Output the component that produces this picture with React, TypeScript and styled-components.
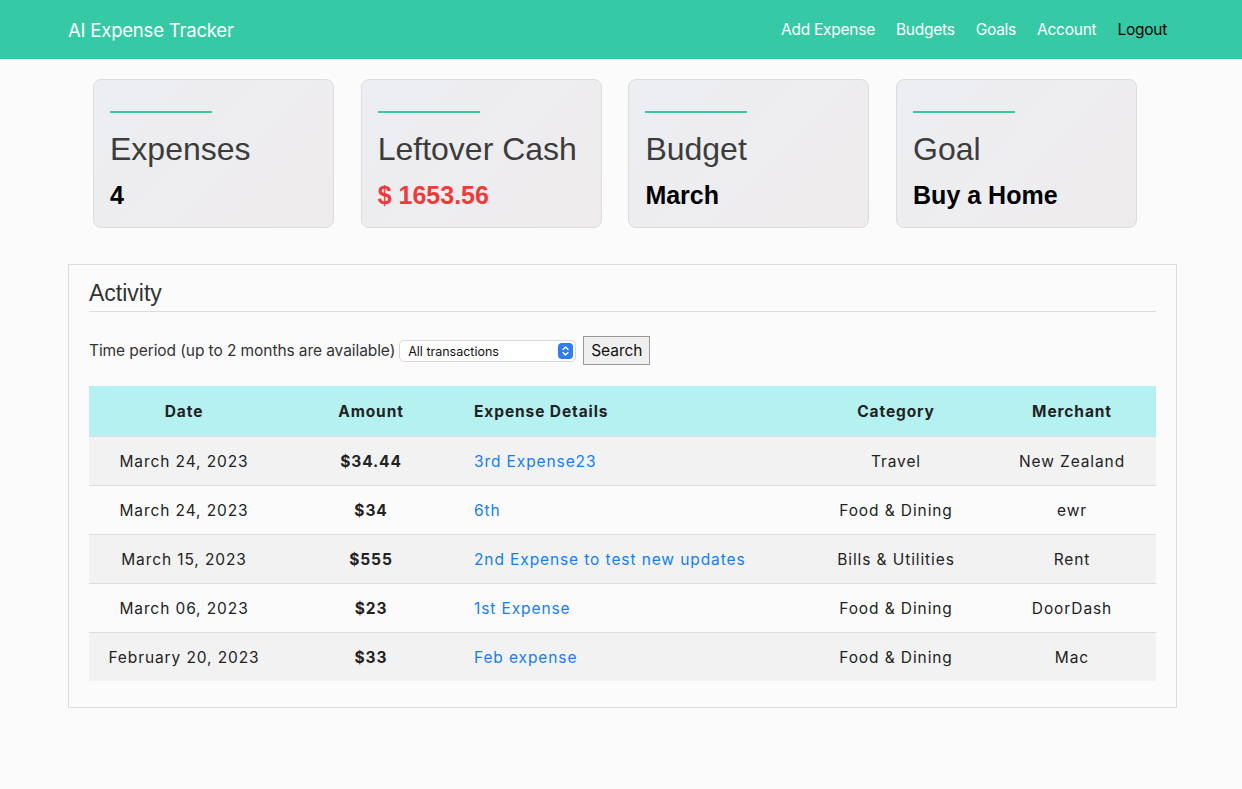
import React from "react";
import styled, { createGlobalStyle } from "styled-components";

const Global = createGlobalStyle`
  html, body { margin: 0; padding: 0; background: #fbfbfb; }
  body { font-family: Inter, "Liberation Sans", Arial, sans-serif; color: #222; }
  * { box-sizing: border-box; }
`;

const Nav = styled.nav`
  height: 59px;
  background: #36c9a5;
  display: flex;
  align-items: center;
  justify-content: space-between;
  padding: 0 75px 0 68px;
`;

const Brand = styled.div`
  color: #fff;
  font-size: 18.5px;
  font-family: Inter, "Liberation Sans", sans-serif;
  letter-spacing: -0.2px;
`;

const Links = styled.div`
  display: flex;
  gap: 21px;
`;

const NavLink = styled.a<{ $dark?: boolean }>`
  color: ${(p) => (p.$dark ? "#000" : "#fff")};
  font-size: 15.5px;
  text-decoration: none;
  letter-spacing: -0.25px;
`;

const Main = styled.main`
  padding: 20px 65px 0 68px;
`;

const Cards = styled.div`
  display: flex;
  gap: 26.7px;
  padding-left: 25px;
`;

const Card = styled.div`
  width: 241px;
  height: 149px;
  border: 1px solid #dcdcdc;
  border-radius: 8px;
  background: linear-gradient(135deg, #eceef2 0%, #efebec 100%);
  padding: 31px 16px 0 16px;
`;

const Accent = styled.div`
  width: 102px;
  height: 2px;
  background: #36c9a5;
`;

const CardTitle = styled.div`
  font-family: "Liberation Sans", Arial, sans-serif;
  font-size: 32px;
  color: #3c3c3c;
  margin-top: 18px;
  line-height: 36px;
`;

const CardValue = styled.div<{ $red?: boolean }>`
  font-family: "Liberation Sans", Arial, sans-serif;
  font-size: 25px;
  font-weight: bold;
  color: ${(p) => (p.$red ? "#f03a3a" : "#000")};
  margin-top: 13px;
  line-height: 30px;
`;

const Panel = styled.section`
  margin-top: 36px;
  border: 1px solid #dcdcdc;
  background: #fbfbfb;
  padding: 14px 20px 26px 20px;
`;

const PanelTitle = styled.h2`
  margin: 0;
  font-family: "Liberation Sans", Arial, sans-serif;
  font-weight: normal;
  font-size: 23px;
  color: #333;
  padding-bottom: 4px;
  border-bottom: 1px solid #dcdcdc;
  line-height: 28px;
`;

const Filter = styled.div`
  display: flex;
  align-items: center;
  margin-top: 24px;
  font-size: 15.5px;
  letter-spacing: -0.08px;
  color: #333;
  gap: 4px;
`;

const Select = styled.div`
  width: 177px;
  height: 22px;
  border: 1px solid #d8d8d8;
  border-radius: 5px;
  background: #fff;
  display: flex;
  align-items: center;
  justify-content: space-between;
  padding: 0 2px 0 8px;
  font-size: 12.5px;
  letter-spacing: 0;
  color: #111;
  margin-top: 1px;
`;

const Stepper = styled.span`
  width: 15px;
  height: 16px;
  border-radius: 4px;
  background: #2f7cf6;
  display: flex;
  align-items: center;
  justify-content: center;
`;

const Button = styled.button`
  margin-left: 3px;
  height: 29px;
  padding: 0 7px;
  border: 1px solid #9a9a9a;
  background: #efefef;
  font-family: Inter, "Liberation Sans", sans-serif;
  font-size: 15.5px;
  letter-spacing: -0.05px;
  color: #111;
  border-radius: 0;
`;

const Table = styled.table`
  margin-top: 21px;
  width: 100%;
  border-collapse: collapse;
  table-layout: fixed;
  letter-spacing: 0.9px;
  font-size: 15.5px;
`;

const Th = styled.th<{ $left?: boolean; $w: number }>`
  width: ${(p) => p.$w}px;
  height: 50px;
  background: #b4f1f0;
  font-weight: bold;
  color: #222;
  text-align: ${(p) => (p.$left ? "left" : "center")};
  padding: 1px ${(p) => (p.$left ? "11px" : "0")} 0;
`;

const Tr = styled.tr<{ $alt: boolean }>`
  background: ${(p) => (p.$alt ? "#f2f2f2" : "#fbfbfb")};
  border-top: 1px solid #dddddd;
`;

const Td = styled.td<{ $left?: boolean; $bold?: boolean }>`
  height: 49px;
  text-align: ${(p) => (p.$left ? "left" : "center")};
  padding: 1px ${(p) => (p.$left ? "11px" : "0")} 0;
  font-weight: ${(p) => (p.$bold ? "bold" : "normal")};
  color: #222;
`;

const Link = styled.a`
  color: #137ef5;
  text-decoration: none;
`;

const rows = [
  ["March 24, 2023", "$34.44", "3rd Expense23", "Travel", "New Zealand"],
  ["March 24, 2023", "$34", "6th", "Food & Dining", "ewr"],
  ["March 15, 2023", "$555", "2nd Expense to test new updates", "Bills & Utilities", "Rent"],
  ["March 06, 2023", "$23", "1st Expense", "Food & Dining", "DoorDash"],
  ["February 20, 2023", "$33", "Feb expense", "Food & Dining", "Mac"],
];

export default function App() {
  return (
    <>
      <Global />
      <Nav>
        <Brand>AI Expense Tracker</Brand>
        <Links>
          <NavLink>Add Expense</NavLink>
          <NavLink>Budgets</NavLink>
          <NavLink>Goals</NavLink>
          <NavLink>Account</NavLink>
          <NavLink $dark>Logout</NavLink>
        </Links>
      </Nav>
      <Main>
        <Cards>
          <Card>
            <Accent />
            <CardTitle>Expenses</CardTitle>
            <CardValue>4</CardValue>
          </Card>
          <Card>
            <Accent />
            <CardTitle>Leftover Cash</CardTitle>
            <CardValue $red>$ 1653.56</CardValue>
          </Card>
          <Card>
            <Accent />
            <CardTitle>Budget</CardTitle>
            <CardValue>March</CardValue>
          </Card>
          <Card>
            <Accent />
            <CardTitle>Goal</CardTitle>
            <CardValue>Buy a Home</CardValue>
          </Card>
        </Cards>
        <Panel>
          <PanelTitle>Activity</PanelTitle>
          <Filter>
            <span>Time period (up to 2 months are available)</span>
            <Select>
              <span>All transactions</span>
              <Stepper>
                <svg width="9" height="12" viewBox="0 0 9 12" fill="none" stroke="#fff" strokeWidth="1.4" strokeLinecap="round" strokeLinejoin="round">
                  <path d="M2 4.5 L4.5 2 L7 4.5" />
                  <path d="M2 7.5 L4.5 10 L7 7.5" />
                </svg>
              </Stepper>
            </Select>
            <Button>Search</Button>
          </Filter>
          <Table>
            <thead>
              <tr>
                <Th $w={190}>Date</Th>
                <Th $w={184}>Amount</Th>
                <Th $w={341} $left>Expense Details</Th>
                <Th $w={184}>Category</Th>
                <Th $w={168}>Merchant</Th>
              </tr>
            </thead>
            <tbody>
              {rows.map((r, i) => (
                <Tr key={i} $alt={i % 2 === 0}>
                  <Td>{r[0]}</Td>
                  <Td $bold>{r[1]}</Td>
                  <Td $left>
                    <Link>{r[2]}</Link>
                  </Td>
                  <Td>{r[3]}</Td>
                  <Td>{r[4]}</Td>
                </Tr>
              ))}
            </tbody>
          </Table>
        </Panel>
      </Main>
    </>
  );
}
